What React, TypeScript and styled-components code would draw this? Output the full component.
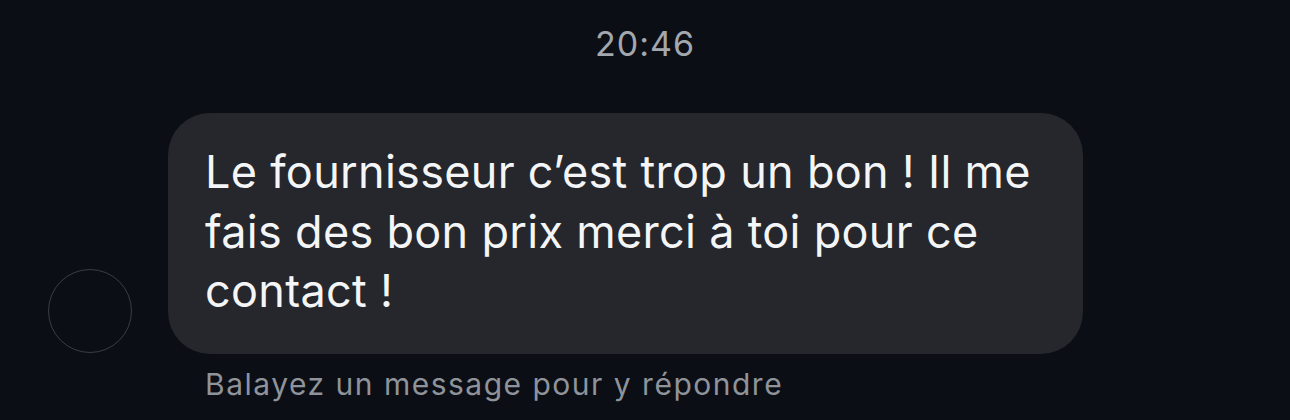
import React from 'react'
import { createGlobalStyle, styled } from 'styled-components'

const GlobalStyle = createGlobalStyle`
  html, body {
    margin: 0;
    padding: 0;
    background: #0b0e15;
  }
  body {
    font-family: Inter, 'Noto Sans', sans-serif;
    -webkit-font-smoothing: antialiased;
  }
`

const Screen = styled.div`
  width: 1290px;
  height: 420px;
  background: #0b0e15;
  display: flex;
  flex-direction: column;
  overflow: hidden;
`

const Timestamp = styled.div`
  margin-top: 22px;
  text-align: center;
  font-size: 34px;
  line-height: 44px;
  color: #a3a7ae;
  letter-spacing: 1px;
`

const MessageRow = styled.div`
  margin-top: 47px;
  display: flex;
  align-items: flex-end;
  padding-left: 48px;
  gap: 36px;
`

const Avatar = styled.div`
  width: 82px;
  height: 82px;
  border-radius: 50%;
  border: 1.5px solid #3a3d43;
  margin-bottom: 1px;
  flex-shrink: 0;
`

const Bubble = styled.div`
  box-sizing: border-box;
  width: 915px;
  padding: 29px 40px 33px 37px;
  background: #25272c;
  border-radius: 42px;
  color: #f4f5f7;
  font-size: 45px;
  line-height: 59.5px;
  letter-spacing: 0.3px;
`

const Hint = styled.div`
  margin-top: 11px;
  padding-left: 205px;
  font-size: 30px;
  line-height: 38px;
  color: #8f939a;
  letter-spacing: 1.5px;
`

export default function App (): JSX.Element {
  return (
    <Screen>
      <GlobalStyle />
      <Timestamp>20:46</Timestamp>
      <MessageRow>
        <Avatar />
        <Bubble>
          Le fournisseur c’est trop un bon ! Il me fais des bon prix merci à toi pour ce contact !
        </Bubble>
      </MessageRow>
      <Hint>Balayez un message pour y répondre</Hint>
    </Screen>
  )
}
